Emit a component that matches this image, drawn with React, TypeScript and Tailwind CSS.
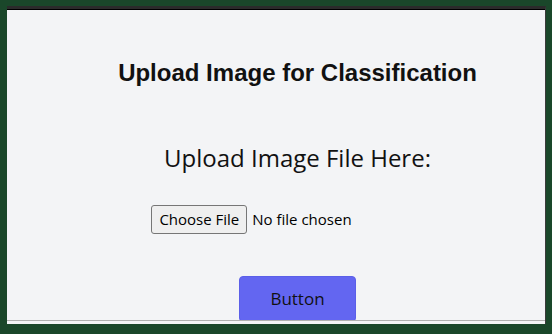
import React from 'react';

export default function App() {
  return (
    <div className="w-[552px] h-[334px] bg-[#1a472a] pt-[6px] pl-[7px] overflow-hidden">
      <div className="w-[539px] h-[318px] flex flex-col bg-[#f3f4f6] border-t-[3px] border-t-[#2b2b2b] border-r border-r-[#3a3a3a]">
        <div className="h-[1px] bg-black" />
        {/* main content, centered a bit right of the panel middle */}
        <div className="h-[310px] overflow-hidden flex flex-col items-center pl-[43px] font-['Open_Sans',sans-serif]">
          <h1 className="mt-[49px] text-[24px] leading-[28px] font-bold text-[#111] font-['Liberation_Sans',Arial,sans-serif]">
            Upload Image for Classification
          </h1>
          <h2 className="mt-[56px] text-[24px] leading-[30px] text-[#111]">Upload Image File Here:</h2>
          <div className="mt-[32px] flex items-center gap-[5px] text-[15px] text-black mr-[92px]">
            <button className="h-[29px] px-[7px] border border-[#767676] rounded-[3px] bg-[#efefef] text-[15px]">
              Choose File
            </button>
            <span>No file chosen</span>
          </div>
          <button className="mt-[42px] w-[117px] h-[46px] shrink-0 rounded-[4px] bg-[#6366f1] border border-[#5b5fe8] text-[17px] text-[#111]">
            Button
          </button>
        </div>
        <div className="h-[4px] border-t border-t-[#b0b0b0]" />
      </div>
    </div>
  );
}
